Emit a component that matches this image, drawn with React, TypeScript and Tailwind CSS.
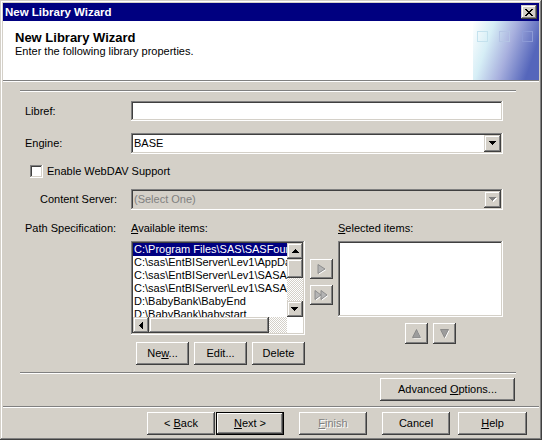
import React from "react";

const raised =
  "bg-[#d4d0c8] shadow-[inset_-1px_-1px_#404040,inset_1px_1px_#ffffff,inset_-2px_-2px_#808080,inset_2px_2px_#d4d0c8]";
const raised2 =
  "bg-[#d4d0c8] shadow-[inset_-1px_-1px_#404040,inset_1px_1px_#d4d0c8,inset_-2px_-2px_#808080,inset_2px_2px_#ffffff]";
const sunken =
  "shadow-[inset_-1px_-1px_#ffffff,inset_1px_1px_#808080,inset_-2px_-2px_#d4d0c8,inset_2px_2px_#404040]";
const sep = "h-[2px] border-t border-t-[#808080] border-b border-b-white";
const dither =
  "bg-[image:repeating-conic-gradient(#ffffff_0%_25%,#d4d0c8_0%_50%)] bg-[length:2px_2px]";

function Btn({
  children,
  className = "",
  def = false,
  disabled = false,
}: {
  children: React.ReactNode;
  className?: string;
  def?: boolean;
  disabled?: boolean;
}) {
  return (
    <div
      className={`flex items-center justify-center h-[23px] ${
        def ? "border border-black" : ""
      } ${raised} ${
        disabled ? "text-[#808080] [text-shadow:1px_1px_#ffffff]" : "text-black"
      } ${className}`}
    >
      {children}
    </div>
  );
}

function DownArrow({ color = "#000000", shadow = false }: { color?: string; shadow?: boolean }) {
  const d = "M0 0h7v1H0z M1 1h5v1H1z M2 2h3v1H2z M3 3h1v1H3z";
  return (
    <svg width="8" height="5" viewBox="0 0 8 5" shapeRendering="crispEdges">
      {shadow && <path d={d} fill="#ffffff" transform="translate(1 1)" />}
      <path d={d} fill={color} />
    </svg>
  );
}

function UpArrow() {
  return (
    <svg width="7" height="4" viewBox="0 0 7 4" shapeRendering="crispEdges">
      <path d="M3 0h1v1H3z M2 1h3v1H2z M1 2h5v1H1z M0 3h7v1H0z" fill="#000000" />
    </svg>
  );
}

function LeftArrow() {
  return (
    <svg width="4" height="7" viewBox="0 0 4 7" shapeRendering="crispEdges">
      <path d="M0 3h1v1H0z M1 2h1v3H1z M2 1h1v5H2z M3 0h1v7H3z" fill="#000000" />
    </svg>
  );
}

function Combo({ value, disabled = false }: { value: string; disabled?: boolean }) {
  return (
    <div
      className={`w-[372px] h-[21px] ${
        disabled ? "bg-[#d4d0c8]" : "bg-white"
      } ${sunken} flex items-center p-[2px]`}
    >
      <span
        className={`flex-1 pl-[1px] leading-[13px] ${
          disabled ? "text-[#808080]" : "text-black"
        }`}
      >
        {value}
      </span>
      <div className={`w-[17px] h-[17px] ${raised2} flex items-center justify-center`}>
        {disabled ? <DownArrow color="#808080" shadow /> : <DownArrow />}
      </div>
    </div>
  );
}

const items = [
  "C:\\Program Files\\SAS\\SASFoundation\\9.1",
  "C:\\sas\\EntBIServer\\Lev1\\AppData",
  "C:\\sas\\EntBIServer\\Lev1\\SASApp",
  "C:\\sas\\EntBIServer\\Lev1\\SASApp\\Data",
  "D:\\BabyBank\\BabyEnd",
  "D:\\BabyBank\\babystart",
];

export default function App() {
  return (
    <div
      className={`w-[542px] h-[440px] overflow-hidden bg-[#d4d0c8] p-[3px] flex flex-col text-[11px] leading-[13px] text-black font-['Liberation_Sans',Arial,sans-serif] shadow-[inset_-1px_-1px_#404040,inset_1px_1px_#d4d0c8,inset_-2px_-2px_#808080,inset_2px_2px_#ffffff]`}
    >
      {/* Title bar */}
      <div className="h-[18px] bg-[#000080] flex items-center justify-between pl-[2px] pr-[2px]">
        <span className="text-white font-bold text-[11.5px] leading-[14px]">New Library Wizard</span>
        <div className={`w-[16px] h-[14px] ${raised2} flex items-center justify-center`}>
          <svg width="8" height="7" viewBox="0 0 8 7" shapeRendering="crispEdges">
            <path
              d="M0 0h2v1H0z M6 0h2v1H6z M1 1h2v1H1z M5 1h2v1H5z M2 2h4v1H2z M3 3h2v1H3z M2 4h4v1H2z M1 5h2v1H1z M5 5h2v1H5z M0 6h2v1H0z M6 6h2v1H6z"
              fill="#000000"
            />
          </svg>
        </div>
      </div>

      {/* Header */}
      <div className="h-[59px] bg-white flex">
        <div className="flex-1 pl-[12px] pt-[9px]">
          <div className="text-[13px] font-bold leading-[15px]">New Library Wizard</div>
          <div className="leading-[13px]">Enter the following library properties.</div>
        </div>
        <svg width="66" height="59" viewBox="0 0 66 59">
          <defs>
            <linearGradient id="hg" x1="0" x2="1" y1="0" y2="0.3">
              <stop offset="0" stopColor="#ffffff" />
              <stop offset="0.3" stopColor="#d6eef6" />
              <stop offset="0.62" stopColor="#a8b0de" />
              <stop offset="1" stopColor="#5566bb" />
            </linearGradient>
          </defs>
          <rect width="66" height="59" fill="url(#hg)" />
          <rect x="4.5" y="10.5" width="10" height="10" fill="none" stroke="#c4e2ee" />
          <rect x="26.5" y="10.5" width="10" height="10" fill="none" stroke="#b4c4e4" />
          <rect x="49.5" y="10.5" width="10" height="10" fill="none" stroke="#8c9ad6" />
        </svg>
      </div>
      <div className={sep} />

      {/* Body */}
      <div className="flex flex-col">
        <div className={`ml-[17px] mt-[8px] w-[496px] ${sep}`} />
        <div className="ml-[22px] flex flex-col">
          <div className="mt-[9px] flex items-center h-[20px]">
            <div className="w-[106px]">Libref:</div>
            <div className={`w-[372px] h-[20px] bg-white ${sunken}`} />
          </div>
          <div className="mt-[12px] flex items-center h-[21px]">
            <div className="w-[106px]">Engine:</div>
            <Combo value="BASE" />
          </div>
          <div className="mt-[11px] flex items-center h-[13px]">
            <div className={`ml-[5px] w-[13px] h-[13px] bg-white ${sunken}`} />
            <span className="ml-[4px]">Enable WebDAV Support</span>
          </div>
          <div className="mt-[11px] flex items-center h-[21px]">
            <div className="w-[106px] pl-[15px]">Content Server:</div>
            <Combo value="(Select One)" disabled />
          </div>
          <div className="mt-[12px] flex">
            <div className="w-[106px]">Path Specification:</div>
            <div className="w-[174px] flex flex-col">
              <div>
                <span className="underline underline-offset-[1px]">A</span>vailable items:
              </div>
              <div className={`mt-[6px] h-[94px] bg-white ${sunken} p-[2px] flex flex-col`}>
                <div className="flex h-[74px]">
                  <div className="w-[154px] overflow-hidden">
                    {items.map((t, i) => (
                      <div
                        key={t}
                        className={`h-[13px] leading-[13px] whitespace-nowrap pl-[1px] ${
                          i === 0 ? "bg-[#000080] text-white" : ""
                        }`}
                      >
                        {t}
                      </div>
                    ))}
                  </div>
                  <div className="w-[16px] flex flex-col">
                    <div className={`h-[16px] ${raised2} flex items-center justify-center`}>
                      <UpArrow />
                    </div>
                    <div className={`h-[19px] ${raised2}`} />
                    <div className={`flex-1 ${dither}`} />
                    <div className={`h-[16px] ${raised2} flex items-center justify-center`}>
                      <DownArrow />
                    </div>
                  </div>
                </div>
                <div className="flex h-[16px]">
                  <div className={`w-[16px] ${raised2} flex items-center justify-center`}>
                    <LeftArrow />
                  </div>
                  <div className={`w-[120px] ${raised2}`} />
                  <div className={`w-[18px] ${dither}`} />
                  <div className="w-[16px] bg-white" />
                </div>
              </div>
              <div className="mt-[7px] ml-[5px] flex gap-[5px]">
                <Btn className="w-[67px]">
                  <span>
                    Ne<span className="underline underline-offset-[1px]">w</span>...
                  </span>
                </Btn>
                <Btn className="w-[67px]">Edit...</Btn>
                <Btn className="w-[67px]">Delete</Btn>
              </div>
            </div>
            <div className="ml-[5px] w-[23px] pt-[37px] flex flex-col gap-[6px]">
              <div className={`h-[20px] ${raised} flex items-center justify-center`}>
                <svg width="10" height="11" viewBox="0 0 10 11">
                  <polygon points="2,1.5 9,6 2,10.5" fill="#ffffff" />
                  <polygon points="1,0.5 8,5 1,9.5" fill="#b4b4b4" stroke="#8c8c8c" strokeWidth="1" />
                </svg>
              </div>
              <div className={`h-[20px] ${raised} flex items-center justify-center`}>
                <svg width="15" height="11" viewBox="0 0 15 11">
                  <polygon points="2,1.5 8,6 2,10.5" fill="#ffffff" />
                  <polygon points="8,1.5 14,6 8,10.5" fill="#ffffff" />
                  <polygon points="1,0.5 7,5 1,9.5" fill="#b4b4b4" stroke="#8c8c8c" strokeWidth="1" />
                  <polygon points="7,0.5 13,5 7,9.5" fill="#b4b4b4" stroke="#8c8c8c" strokeWidth="1" />
                </svg>
              </div>
            </div>
            <div className="ml-[5px] w-[165px] flex flex-col">
              <div>
                <span className="underline underline-offset-[1px]">S</span>elected items:
              </div>
              <div className={`mt-[6px] h-[76px] bg-white ${sunken}`} />
              <div className="mt-[6px] ml-[67px] flex gap-[5px]">
                <div className={`w-[23px] h-[21px] ${raised} flex items-center justify-center`}>
                  <svg width="10" height="10" viewBox="0 0 10 10">
                    <polygon points="5.5,1.5 9.5,9.5 1.5,9.5" fill="#ffffff" />
                    <polygon points="4.5,0.5 8.5,8.5 0.5,8.5" fill="#9c9c9c" stroke="#808080" strokeWidth="0.8" />
                  </svg>
                </div>
                <div className={`w-[23px] h-[21px] ${raised} flex items-center justify-center`}>
                  <svg width="10" height="10" viewBox="0 0 10 10">
                    <polygon points="1.5,1.5 9.5,1.5 5.5,9.5" fill="#ffffff" />
                    <polygon points="0.5,0.5 8.5,0.5 4.5,8.5" fill="#9c9c9c" stroke="#808080" strokeWidth="0.8" />
                  </svg>
                </div>
              </div>
            </div>
          </div>
        </div>
        <div className={`ml-[17px] mt-[7px] w-[496px] ${sep}`} />
        <div className="mt-[4px] ml-[377px]">
          <Btn className="w-[135px]">
            <span>
              Advanced <span className="underline underline-offset-[1px]">O</span>ptions...
            </span>
          </Btn>
        </div>
        <div className={`mt-[5px] ${sep}`} />
        <div className="mt-[4px] pl-[144px] flex">
          <Btn className="w-[68px]">
            <span>
              &lt; <span className="underline underline-offset-[1px]">B</span>ack
            </span>
          </Btn>
          <Btn className="w-[68px] ml-[1px]" def>
            <span>
              <span className="underline underline-offset-[1px]">N</span>ext &gt;
            </span>
          </Btn>
          <Btn className="w-[68px] ml-[15px]" disabled>
            <span>
              <span className="underline underline-offset-[1px]">F</span>inish
            </span>
          </Btn>
          <Btn className="w-[68px] ml-[15px]">Cancel</Btn>
          <Btn className="w-[69px] ml-[8px]">
            <span>
              <span className="underline underline-offset-[1px]">H</span>elp
            </span>
          </Btn>
        </div>
      </div>
    </div>
  );
}
